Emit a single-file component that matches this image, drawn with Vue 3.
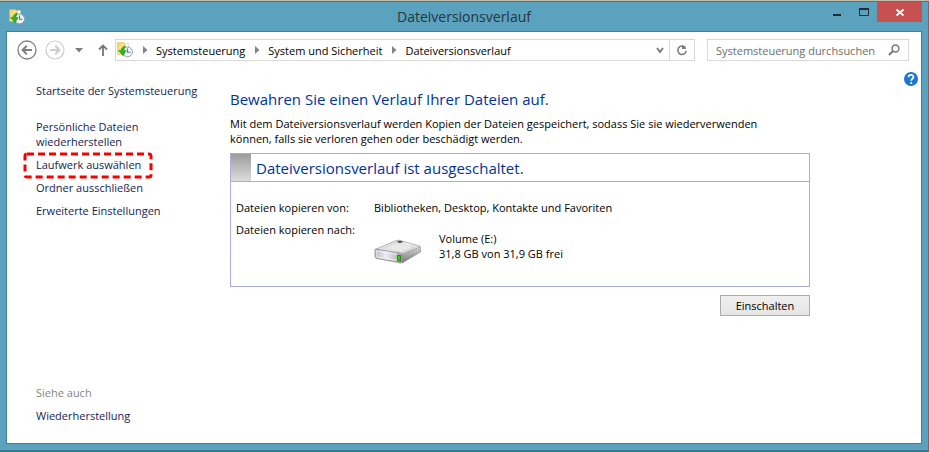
<script setup>
import { ref } from 'vue'

const query = ref('')
const crumbs = ['Systemsteuerung', 'System und Sicherheit', 'Dateiversionsverlauf']
const tasks = [
  { label: 'Persönliche Dateien wiederherstellen' },
  { label: 'Laufwerk auswählen', marked: true },
  { label: 'Ordner ausschließen' },
  { label: 'Erweiterte Einstellungen' },
]
</script>

<template>
  <div class="desktop">
    <svg class="defs" width="0" height="0" aria-hidden="true">
      <defs>
        <linearGradient id="folder" x1="0" y1="0" x2="1" y2="1">
          <stop offset="0" stop-color="#f9d35c" />
          <stop offset="1" stop-color="#fdf0b4" />
        </linearGradient>
        <symbol id="history" viewBox="0 0 16 16">
          <path d="M8 1.5h3.5v8H5z" fill="#fff" stroke="#c3cdd2" stroke-width=".6" />
          <path d="M.6.7h6l1.2 1.4v10.2H.6z" fill="url(#folder)" stroke="#e8bd48" stroke-width=".7" />
          <circle cx="10.6" cy="9.9" r="4.9" fill="#eef4f8" stroke="#94a3ae" stroke-width="1" />
          <path d="M10.5 6.6v3.6h3" fill="none" stroke="#5f7586" stroke-width="1.1" />
          <path d="M8.6 3.9C5.9 4.4 4.4 6 4 8.4H1.5l4.6 5.4 3-5.2H6.900c.1-1.900.5-3.200 1.700-4.700z" fill="#2fb41c" stroke="#1b8d13" stroke-width=".5" />
        </symbol>
      </defs>
    </svg>

    <div class="window">
      <header class="titlebar">
        <svg class="app-icon" width="16" height="16"><use href="#history" /></svg>
        <h1 class="title">Dateiversionsverlauf</h1>
        <div class="captions">
          <button class="caption" aria-label="Minimieren">
            <svg width="28" height="20"><rect x="12" y="12" width="8" height="2" fill="#222b30" /></svg>
          </button>
          <button class="caption" aria-label="Maximieren">
            <svg width="28" height="20"><path d="M10.500 7v6.500h9V7" fill="none" stroke="#222b30" /><rect x="10" y="6" width="10" height="2" fill="#222b30" /></svg>
          </button>
          <button class="caption close" aria-label="Schließen">
            <svg width="45" height="20"><path d="M19.500 7.500l7 6M26.500 7.500l-7 6" stroke="#fff" stroke-width="1.800" /></svg>
          </button>
        </div>
      </header>

      <div class="client">
        <nav class="toolbar" aria-label="Navigation">
          <button class="tool circle" aria-label="Zurück">
            <svg width="20" height="20" fill="none" stroke="#7f7f7f">
              <circle cx="10" cy="10" r="9" stroke-width="1.300" />
              <path d="M15 10H6M9.800 5.800L5.600 10l4.200 4.200" stroke-width="2" />
            </svg>
          </button>
          <button class="tool circle" aria-label="Vorwärts">
            <svg width="20" height="20" fill="none" stroke="#cdcdcd">
              <circle cx="10" cy="10" r="9" stroke-width="1.200" />
              <path d="M5 10h9M10.200 5.800l4.200 4.200-4.200 4.200" stroke-width="2" />
            </svg>
          </button>
          <button class="tool history" aria-label="Verlauf">
            <svg width="8" height="5"><path d="M0 0h8L4 4.500z" fill="#7d7d7d" /></svg>
          </button>
          <button class="tool up" aria-label="Nach oben">
            <svg width="10" height="12" fill="none" stroke="#777" stroke-width="1.800"><path d="M5 12V2M1 5.500l4-4 4 4" /></svg>
          </button>

          <div class="address">
            <svg class="place" width="16" height="16"><use href="#history" /></svg>
            <template v-for="crumb in crumbs" :key="crumb">
              <svg class="sep" width="5" height="8"><path d="M0 0l4.500 4L0 8z" fill="#848484" /></svg>
              <a class="crumb" href="#">{{ crumb }}</a>
            </template>
            <button class="tool drop" aria-label="Vorherige Orte">
              <svg width="8" height="7"><path d="M1 1l3 4 3-4" fill="none" stroke="#777" stroke-width="1.800" /></svg>
            </button>
            <button class="tool refresh" aria-label="Aktualisieren">
              <svg width="12" height="12">
                <path d="M9.400 3.800A4.200 4.200 0 1 0 10.200 6.800" fill="none" stroke="#777" stroke-width="1.500" />
                <path d="M6 1v4h4.500z" fill="#777" />
              </svg>
            </button>
          </div>

          <div class="search">
            <input v-model="query" type="text" aria-label="Systemsteuerung durchsuchen" placeholder="Systemsteuerung durchsuchen" />
            <svg width="12" height="12" fill="none" stroke="#777">
              <circle cx="7.500" cy="4.500" r="3.400" stroke-width="1.500" />
              <path d="M5 7L1 11" stroke-width="2" />
            </svg>
          </div>
        </nav>

        <div class="body">
          <aside class="sidebar">
            <a class="home" href="#">Startseite der Systemsteuerung</a>
            <ul class="tasks">
              <li v-for="task in tasks" :key="task.label" :class="{ marked: task.marked }">
                <a href="#">{{ task.label }}</a>
                <svg v-if="task.marked" class="marker" aria-hidden="true">
                  <rect x="2" y="2" width="126" height="23" rx="2" />
                </svg>
              </li>
            </ul>
            <div class="related">
              <span class="muted">Siehe auch</span>
              <a href="#">Wiederherstellung</a>
            </div>
          </aside>

          <main class="content">
            <h2 class="headline">Bewahren Sie einen Verlauf Ihrer Dateien auf.</h2>
            <p class="intro">
              Mit dem Dateiversionsverlauf werden Kopien der Dateien gespeichert, sodass Sie sie wiederverwenden
              können, falls sie verloren gehen oder beschädigt werden.
            </p>
            <section class="panel">
              <h3 class="status">Dateiversionsverlauf ist ausgeschaltet.</h3>
              <dl class="details">
                <dt>Dateien kopieren von:</dt>
                <dd>Bibliotheken, Desktop, Kontakte und Favoriten</dd>
                <dt>Dateien kopieren nach:</dt>
                <dd class="drive">
                  <svg width="48" height="26" viewBox="0 0 48 26">
                    <defs>
                      <linearGradient id="lid" x1="0" y1="0" x2="1" y2="1">
                        <stop offset="0" stop-color="#c4c4c4" />
                        <stop offset=".5" stop-color="#f4f4f4" />
                        <stop offset="1" stop-color="#bdbdbd" />
                      </linearGradient>
                      <linearGradient id="front" x1="0" y1="0" x2="1" y2="0">
                        <stop offset="0" stop-color="#b9b9bd" />
                        <stop offset=".4" stop-color="#ececf2" />
                        <stop offset="1" stop-color="#a9a9ad" />
                      </linearGradient>
                      <linearGradient id="edge" x1="0" y1="0" x2="0" y2="1">
                        <stop offset="0" stop-color="#d4d4d4" />
                        <stop offset="1" stop-color="#777" />
                      </linearGradient>
                    </defs>
                    <path d="M3 20l24 5L47 13v-3L30 22z" fill="#d6d6d6" />
                    <path d="M1 10.500L21 2q2-1 4-.8l20 5.600q1.500.5 1 2L28 15.500 3 12z" fill="url(#lid)" stroke="#999" stroke-width=".7" />
                    <path d="M9 9.500L23 4l17 4-13 5z" fill="#e9e9e9" stroke="#cfcfcf" stroke-width=".5" />
                    <ellipse cx="26" cy="2.800" rx="2.800" ry="1.100" fill="#555" />
                    <path d="M28 15l18.500-7.200v5.200L29 23.500l-2 .5z" fill="url(#edge)" stroke="#888" stroke-width=".5" />
                    <path d="M1 11q0-1 1.500-.8L26 14q2 .3 2 2v6.500q0 1.300-1.500 1L3 19.500q-2-.4-2-2z" fill="url(#front)" stroke="#8b8b8b" stroke-width=".8" />
                    <path d="M2.500 12L23 15.300v6L3 18z" fill="none" stroke="#f8f8ff" stroke-width=".7" />
                    <path d="M23.300 16l3.200.5v5.800l-3.200-.6z" fill="#35c800" stroke="#215b12" stroke-width=".7" />
                  </svg>
                  <div>Volume (E:)<br />31,8 GB von 31,9 GB frei</div>
                </dd>
              </dl>
            </section>
            <button class="primary">Einschalten</button>
          </main>

          <button class="tool help" aria-label="Hilfe">
            <svg width="14" height="14" viewBox="0 0 14 14">
              <circle cx="7" cy="7" r="7" fill="#1976d2" />
              <path d="M4.600 5.200C4.600 2.200 9.500 2.300 9.500 5c0 1.700-2.300 1.800-2.300 3.800" fill="none" stroke="#fff" stroke-width="1.700" />
              <circle cx="7.200" cy="11" r="1.100" fill="#fff" />
            </svg>
          </button>
        </div>
      </div>
    </div>
  </div>
</template>

<style>
body {
  background: #5ba2bf;
}
</style>

<style scoped>
.desktop {
  box-sizing: border-box;
  display: flex;
  min-height: 100vh;
  padding: 1px 0;
  background: linear-gradient(#c4bcab 0 50%, #2d7894 50%);
  color: #000;
  font: 11px/15px "Open Sans", "Noto Sans", sans-serif;
}
.defs {
  position: absolute;
}
.window {
  flex: 1;
  display: flex;
  flex-direction: column;
  padding: 0 6px 6px;
  border: 1px solid #41798f;
  border-left: 0;
  background: #5ba2bf;
}
.titlebar {
  display: grid;
  grid-template-columns: 120px 1fr 120px;
  align-items: center;
  height: 29px;
}
.app-icon {
  margin-left: 3px;
}
.title {
  margin: 0;
  color: #26353d;
  font-size: 14px;
  line-height: 29px;
  font-weight: 400;
  text-align: center;
}
.captions {
  display: flex;
  align-self: start;
  justify-content: flex-end;
}
.caption {
  padding: 0;
  border: 0;
  background: none;
}
.caption svg,
.tool svg {
  display: block;
}
.close {
  background: #c75050;
}
.client {
  flex: 1;
  display: flex;
  flex-direction: column;
  border: 1px solid #437f97;
  background: #fff;
}
.toolbar {
  display: flex;
  align-items: center;
  padding: 7px 12px 0 10px;
}
.tool {
  display: flex;
  align-items: center;
  justify-content: center;
  padding: 0;
  border: 0;
  background: none;
}
.circle + .circle {
  margin-left: 8px;
}
.history {
  width: 28px;
}
.up {
  width: 20px;
}
.address,
.search {
  box-sizing: border-box;
  display: flex;
  align-items: center;
  height: 22px;
  border: 1px solid #d9d9d9;
}
.address {
  flex: 1;
  margin-left: 2px;
}
.place {
  margin-left: 1px;
}
.sep {
  margin: 0 8px 0 10px;
}
.crumb {
  color: #000;
}
.drop {
  width: 18px;
  align-self: stretch;
  margin-left: auto;
}
.refresh {
  width: 25px;
  align-self: stretch;
  border-left: 1px solid #d9d9d9;
}
.search {
  width: 202px;
  margin-left: 12px;
  padding: 0 8px;
}
.search input {
  flex: 1;
  min-width: 0;
  padding: 0;
  border: 0;
  outline: 0;
  background: none;
  font: inherit;
}
.search input::placeholder {
  color: #6d6d6d;
  opacity: 1;
}
a {
  color: #151c55;
  text-decoration: none;
}
.body {
  flex: 1;
  display: flex;
}
.sidebar {
  display: flex;
  flex-direction: column;
  width: 194px;
  padding: 22px 0 20px 29px;
  box-sizing: border-box;
  margin-right: 29px;
}
.home {
  white-space: nowrap;
}
.tasks {
  display: flex;
  flex-direction: column;
  gap: 8px;
  max-width: 140px;
  margin: 21px 0;
  padding: 0;
  list-style: none;
}
.marked {
  position: relative;
}
.marker {
  position: absolute;
  top: -5px;
  left: -13px;
  width: 130px;
  height: 27px;
  fill: none;
  stroke: #f60000;
  stroke-width: 3px;
  stroke-dasharray: 7 4;
  pointer-events: none;
}
.related {
  display: flex;
  flex-direction: column;
  gap: 8px;
  margin-top: auto;
}
.muted {
  color: #858585;
}
.content {
  flex: 1;
  min-width: 0;
  padding-top: 28px;
}
.headline,
.status {
  margin: 0;
  color: #003399;
  font-size: 15px;
  line-height: 20px;
  font-weight: 400;
}
.intro {
  max-width: 560px;
  margin: 7px 0;
}
.panel {
  border: 1px solid #adaadd;
}
.status {
  display: flex;
  align-items: center;
  gap: 5px;
  height: 27px;
  border-bottom: 1px solid #adaadd;
}
.status::before {
  content: "";
  align-self: stretch;
  width: 20px;
  background: linear-gradient(#9c9c9c, #dcdcdc);
}
.details {
  display: grid;
  grid-template-columns: 130px 1fr;
  gap: 7px 8px;
  margin: 0;
  padding: 18px 5px 21px;
}
.details dd {
  margin: 0;
}
.details .drive {
  display: flex;
  align-items: center;
  gap: 17px;
  padding-top: 5px;
}
.drive svg {
  margin-top: 12px;
}
.primary {
  display: block;
  width: 90px;
  height: 21px;
  margin: 8px 0 0 auto;
  padding: 0;
  border: 1px solid #acacac;
  background: linear-gradient(#f0f0f0, #e5e5e5);
  color: #000;
  font: inherit;
}
.help {
  align-self: flex-start;
  margin: 11px 3px 0 94px;
}
</style>
